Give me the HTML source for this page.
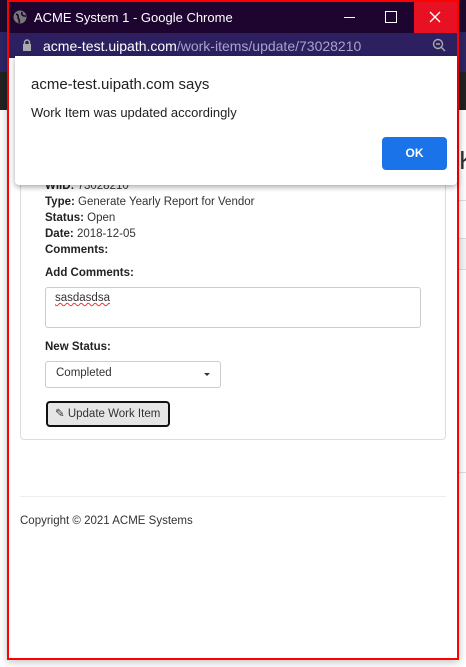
<!DOCTYPE html>
<html><head><style>
body{margin:0;width:466px;height:667px;position:relative;overflow:hidden;background:#fff;font-family:"Liberation Sans",sans-serif;}
.bgdark{position:absolute;left:0;top:0;width:466px;height:32px;background:#1d0a2e}
.bgblue{position:absolute;left:0;top:32px;width:466px;height:40px;background:#2e2566}
.bgnav{position:absolute;left:0;top:72px;width:466px;height:38px;background:#222}
.win{position:absolute;left:7px;top:0;width:448px;height:656px;border:2px solid #f00;background:#fff;overflow:hidden;box-shadow:0 2px 8px rgba(0,0,0,.25)}
.title{position:absolute;left:0;top:0;width:448px;height:31px;background:#1d0530;color:#fff;font-size:13px}
.addr{position:absolute;left:0;top:31px;width:448px;height:25px;background:#2d2060;font-size:14px}
.close{position:absolute;right:0;top:0;width:43px;height:31px;background:#e81123}
.dlg{position:absolute;left:15px;top:56px;width:442px;height:129px;background:#fff;border-radius:0 0 4px 4px;box-shadow:0 2px 6px rgba(0,0,0,.35);font-family:"Liberation Sans",sans-serif;color:#202124}
.card{position:absolute;left:20px;top:150px;width:424px;height:286px;border:1px solid #ddd;border-radius:4px;background:#fff}
.t{position:absolute;font-size:11.5px;color:#333;white-space:nowrap}
b{color:#222}
</style></head><body>
<div class="bgdark"></div><div class="bgblue"></div><div class="bgnav"></div>
<div style="position:absolute;left:459px;top:145px;font-size:26px;color:#333">K</div>
<div style="position:absolute;left:459px;top:200px;width:7px;height:1px;background:#ddd"></div>
<div style="position:absolute;left:459px;top:238px;width:7px;height:30px;background:#f5f5f5;border-top:1px solid #ddd;border-bottom:1px solid #ddd"></div>
<div style="position:absolute;left:459px;top:472px;width:7px;height:1px;background:#ddd"></div>
<div class="win">
 <div class="title">
  <svg style="position:absolute;left:4px;top:8px" width="14" height="14" viewBox="0 0 14 14"><circle cx="7" cy="7" r="6.5" fill="#777"/><path d="M3 4 Q6 5 5 8 Q7 10 6 13 M9 2 Q8 5 11 6 L13 6" stroke="#1d0530" stroke-width="1.6" fill="none"/></svg>
  <span style="position:absolute;left:25px;top:8px">ACME System 1 - Google Chrome</span>
  <div style="position:absolute;left:335px;top:15px;width:11px;height:1px;background:#fff"></div>
  <div style="position:absolute;left:376px;top:9px;width:10px;height:10px;border:1px solid #fff"></div>
  <div class="close"><svg width="43" height="31"><path d="M16 10 L26 20 M26 10 L16 20" stroke="#fff" stroke-width="1.3"/></svg></div>
 </div>
 <div class="addr">
  <svg style="position:absolute;left:13px;top:6px" width="10" height="12" viewBox="0 0 10 12"><path d="M2.5 5 V3.5 a2.5 2.5 0 0 1 5 0 V5" stroke="#aaa" stroke-width="1.4" fill="none"/><rect x="1" y="5" width="8" height="7" fill="#aaa"/></svg>
  <span style="position:absolute;left:34px;top:5px;color:#fff">acme-test.uipath.com<span style="color:#a9a3c8">/work-items/update/73028210</span></span>
  <svg style="position:absolute;left:423px;top:5px" width="14" height="14"><circle cx="6" cy="6" r="4.5" stroke="#aaa" stroke-width="1.4" fill="none"/><path d="M4 6 H8 M9.5 9.5 L13 13" stroke="#aaa" stroke-width="1.4"/></svg>
 </div>
 <div class="card" style="left:11px"></div>
 <div class="t" style="left:36px;top:178px"><b>WIID:</b> 73028210</div>
 <div class="t" style="left:36px;top:194px"><b>Type:</b> Generate Yearly Report for Vendor</div>
 <div class="t" style="left:36px;top:210px"><b>Status:</b> Open</div>
 <div class="t" style="left:36px;top:226px"><b>Date:</b> 2018-12-05</div>
 <div class="t" style="left:36px;top:242px"><b>Comments:</b></div>
 <div class="t" style="left:36px;top:265px"><b>Add Comments:</b></div>
 <div style="position:absolute;left:36px;top:285px;width:374px;height:39px;border:1px solid #ccc;border-radius:3px"></div>
 <div class="t" style="left:46px;top:290px;text-decoration:underline wavy #e33;text-decoration-thickness:1px">sasdasdsa</div>
 <div class="t" style="left:36px;top:339px"><b>New Status:</b></div>
 <div style="position:absolute;left:36px;top:359px;width:174px;height:25px;border:1px solid #ccc;border-radius:3px"></div>
 <div class="t" style="left:47px;top:365px">Completed</div>
 <div style="position:absolute;left:195px;top:371px;border-left:3px solid transparent;border-right:3px solid transparent;border-top:3px solid #333"></div>
 <div style="position:absolute;left:37px;top:399px;width:120px;height:22px;border:2px solid #111;border-radius:4px;background:#e6e6e6"></div>
 <div class="t" style="left:46px;top:404px">✎ Update Work Item</div>
 <div style="position:absolute;left:11px;top:494px;width:426px;height:1px;background:#eee"></div>
 <div class="t" style="left:11px;top:513px">Copyright © 2021 ACME Systems</div>
</div>
<div class="dlg">
 <div style="position:absolute;left:16px;top:20px;font-size:15px">acme-test.uipath.com says</div>
 <div style="position:absolute;left:16px;top:49px;font-size:13px">Work Item was updated accordingly</div>
 <div style="position:absolute;left:367px;top:81px;width:65px;height:33px;background:#1a73e8;border-radius:4px;color:#fff;font-size:12px;font-weight:bold;text-align:center;line-height:33px">OK</div>
</div>
</body></html>
